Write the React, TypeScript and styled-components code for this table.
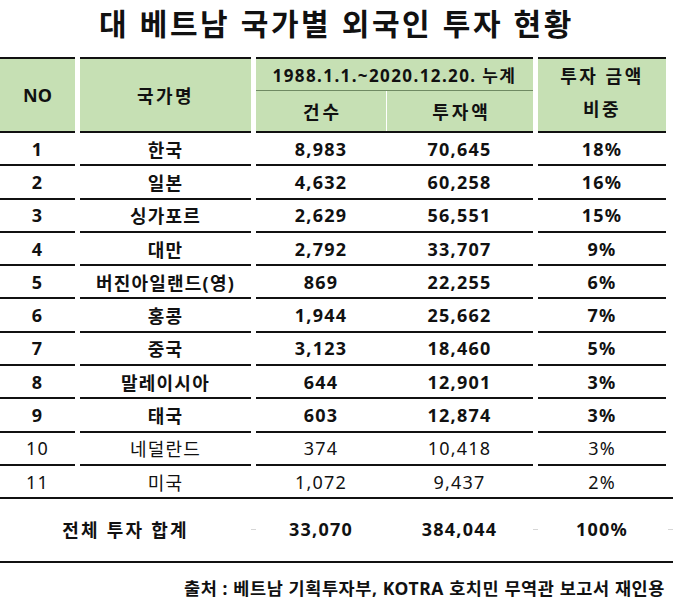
import React from 'react';
import styled, { createGlobalStyle } from 'styled-components';

interface Investment {
  no: number;
  country: string;
  count: string;
  amount: string;
  share: string;
  highlight: boolean;
}

const rows: Investment[] = [
  { no: 1, country: '한국', count: '8,983', amount: '70,645', share: '18%', highlight: true },
  { no: 2, country: '일본', count: '4,632', amount: '60,258', share: '16%', highlight: true },
  { no: 3, country: '싱가포르', count: '2,629', amount: '56,551', share: '15%', highlight: true },
  { no: 4, country: '대만', count: '2,792', amount: '33,707', share: '9%', highlight: true },
  { no: 5, country: '버진아일랜드(영)', count: '869', amount: '22,255', share: '6%', highlight: true },
  { no: 6, country: '홍콩', count: '1,944', amount: '25,662', share: '7%', highlight: true },
  { no: 7, country: '중국', count: '3,123', amount: '18,460', share: '5%', highlight: true },
  { no: 8, country: '말레이시아', count: '644', amount: '12,901', share: '3%', highlight: true },
  { no: 9, country: '태국', count: '603', amount: '12,874', share: '3%', highlight: true },
  { no: 10, country: '네덜란드', count: '374', amount: '10,418', share: '3%', highlight: false },
  { no: 11, country: '미국', count: '1,072', amount: '9,437', share: '2%', highlight: false },
];

const App: React.FC = () => {
  return (
    <Page>
      <GlobalStyle />
      <Title>대 베트남 국가별 외국인 투자 현황</Title>

      <HeadRow>
        <HeadCell $width={75} $spacing={0}>NO</HeadCell>
        <HeadCell $width={171}>국가명</HeadCell>
        <HeadGroup>
          <PeriodCell>1988.1.1.~2020.12.20. 누계</PeriodCell>
          <SubRow>
            <SubCell $width={130}>건수</SubCell>
            <SubCell $width={147} $divider>투자액</SubCell>
          </SubRow>
        </HeadGroup>
        <HeadCell $width={128}>
          <ShareLabel>
            투자 금액
            <br />
            비중
          </ShareLabel>
        </HeadCell>
      </HeadRow>

      {rows.map((row, index) => {
        const solid = index === rows.length - 1;
        return (
          <BodyRow key={row.no} $solid={solid} $bold={row.highlight}>
            <Cell $width={75} $line={!solid}>{row.no}</Cell>
            <Cell $width={171} $line={!solid}>{row.country}</Cell>
            <Group $line={!solid}>
              <Value $width={130}>{row.count}</Value>
              <Value $width={147}>{row.amount}</Value>
            </Group>
            <Cell $width={128} $line={!solid}>{row.share}</Cell>
          </BodyRow>
        );
      })}

      <TotalRow>
        <TotalLabel>전체 투자 합계</TotalLabel>
        <Tick $width={5} />
        <Value $width={130}>33,070</Value>
        <Value $width={147}>384,044</Value>
        <Tick $width={5} />
        <Value $width={128}>100%</Value>
        <Tick $width={7} $end />
      </TotalRow>

      <Source>출처 : 베트남 기획투자부, KOTRA 호치민 무역관 보고서 재인용</Source>
    </Page>
  );
};

const GlobalStyle = createGlobalStyle`
  html, body {
    margin: 0;
    padding: 0;
    background: #ffffff;
  }

  body {
    font-family: 'Noto Sans', 'Noto Sans CJK KR', sans-serif;
    color: #111;
  }
`;

const Page = styled.div`
  width: 673px;
  height: 606px;
  overflow: hidden;
`;

const Title = styled.h1`
  margin: 0;
  height: 57px;
  display: flex;
  align-items: center;
  justify-content: center;
  padding-bottom: 13px;
  box-sizing: border-box;
  font-size: 30px;
  font-weight: 700;
  letter-spacing: 2.6px;
  color: #111;
`;

const HeadRow = styled.div`
  display: flex;
  gap: 5px;
  height: 76px;
`;

const HeadCell = styled.div<{ $width: number; $spacing?: number }>`
  width: ${({ $width }) => $width}px;
  box-sizing: border-box;
  display: flex;
  align-items: center;
  justify-content: center;
  background: #c6e0b4;
  border-top: 2px solid #111;
  border-bottom: 2px solid #111;
  font-size: 18px;
  font-weight: 700;
  letter-spacing: ${({ $spacing }) => $spacing ?? 2.5}px;
`;

const ShareLabel = styled.div`
  line-height: 33px;
  text-align: center;
  padding-bottom: 4px;
`;

const HeadGroup = styled.div`
  width: 277px;
  box-sizing: border-box;
  display: flex;
  flex-direction: column;
  background: #c6e0b4;
  border-top: 2px solid #111;
  border-bottom: 2px solid #111;
`;

const PeriodCell = styled.div`
  height: 31px;
  display: flex;
  align-items: center;
  justify-content: center;
  border-bottom: 1px solid #6f8a63;
  font-size: 17px;
  font-weight: 700;
  letter-spacing: 1.4px;
`;

const SubRow = styled.div`
  flex: 1;
  display: flex;
`;

const SubCell = styled.div<{ $width: number; $divider?: boolean }>`
  width: ${({ $width }) => $width}px;
  box-sizing: border-box;
  display: flex;
  align-items: center;
  justify-content: center;
  border-left: ${({ $divider }) => ($divider ? '1px solid #ffffff' : 'none')};
  font-size: 18px;
  font-weight: 700;
  letter-spacing: 3px;
  padding-left: 3px;
`;

const BodyRow = styled.div<{ $solid: boolean; $bold: boolean }>`
  display: flex;
  gap: 5px;
  height: 33.3px;
  box-sizing: border-box;
  border-bottom: ${({ $solid }) => ($solid ? '2px solid #111' : 'none')};
  font-size: 18px;
  font-weight: ${({ $bold }) => ($bold ? 700 : 400)};
  letter-spacing: 1.2px;
`;

const Cell = styled.div<{ $width: number; $line: boolean }>`
  width: ${({ $width }) => $width}px;
  box-sizing: border-box;
  display: flex;
  align-items: center;
  justify-content: center;
  border-bottom: ${({ $line }) => ($line ? '2px solid #111' : 'none')};
`;

const Group = styled.div<{ $line: boolean }>`
  width: 277px;
  box-sizing: border-box;
  display: flex;
  border-bottom: ${({ $line }) => ($line ? '2px solid #111' : 'none')};
`;

const Value = styled.div<{ $width: number }>`
  width: ${({ $width }) => $width}px;
  display: flex;
  align-items: center;
  justify-content: center;
`;

const TotalRow = styled.div`
  display: flex;
  height: 64px;
  box-sizing: border-box;
  border-bottom: 2px solid #111;
  font-size: 18px;
  font-weight: 700;
  letter-spacing: 1.2px;
  padding-bottom: 2px;
`;

const TotalLabel = styled.div`
  width: 251px;
  display: flex;
  align-items: center;
  justify-content: center;
  letter-spacing: 2.2px;
`;

const Tick = styled.div<{ $width: number; $end?: boolean }>`
  width: ${({ $width }) => $width}px;
  display: flex;
  align-items: center;
  justify-content: ${({ $end }) => ($end ? 'flex-end' : 'center')};

  &::after {
    content: '';
    display: block;
    width: 5px;
    height: 1px;
    background: #d6d6d6;
  }
`;

const Source = styled.div`
  height: 43px;
  display: flex;
  align-items: center;
  justify-content: flex-end;
  padding: 6px 8px 0 0;
  box-sizing: border-box;
  font-size: 17.5px;
  font-weight: 700;
  letter-spacing: 0.6px;
`;

export default App;
